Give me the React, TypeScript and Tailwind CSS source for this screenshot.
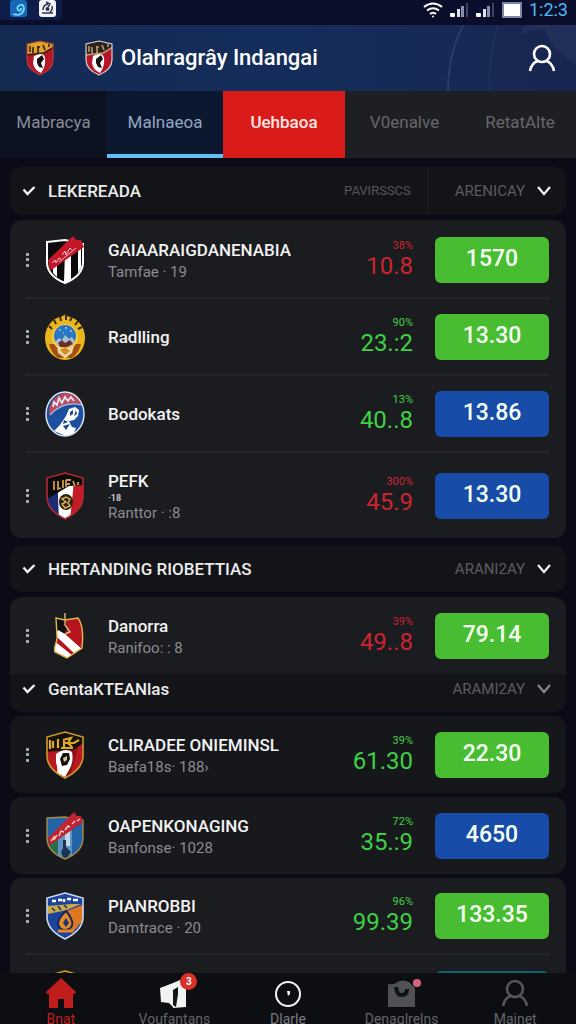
import { useState } from "react";
import type { ReactNode } from "react";

type Team = {
  name: string;
  note?: string;
  sub?: string;
  pct?: string;
  value?: string;
  up?: boolean;
  odds?: string;
  color: string;
  crest: ReactNode;
};

const SHIELD = "M20 1 L38 6 V25 C38 35 30 42 20 47 C10 42 2 35 2 25 V6 Z";

const Crest = ({ children }: { children: ReactNode }) => (
  <svg viewBox="0 0 40 48" className="h-12 w-10 shrink-0" aria-hidden="true">
    {children}
  </svg>
);

const StripeCrest = () => (
  <Crest>
    <path d="M2 6 L20 4 L38 8 V26 C38 36 30 43 20 47 C10 43 2 36 2 26 Z" fill="#0b0b0d" />
    <path d="M20 15 H26 V44 L20 47 L19 46 Z M8 29 H12 V41 L8 37 Z M33 10 H36 V32 L33 37 Z" fill="#fff" />
    <path d="M2 6 L20 4 L38 8 V26 C38 36 30 43 20 47 C10 43 2 36 2 26 Z" fill="none" stroke="#fff" strokeWidth="2" />
    <path d="M3 24 L28 0 L31 4 L36 4 L39 11 L5 35 Z" fill="#c4182a" />
    <path d="M7 27 L10 24 L11 27 L14 22 L16 23 M17 19 L20 15 L21 19 L25 12 L27 14 M14 26 L31 12" stroke="#f3c9cb" strokeWidth="1" fill="none" />
  </Crest>
);

const SunCrest = () => (
  <Crest>
    <circle cx="20" cy="4" r="2.500" fill="#b8860f" />
    <ellipse cx="20" cy="25" rx="20" ry="22" fill="#e8b51c" />
    <path d="M4 13 L7 16 M9 7 L11 11 M15 3 L16 8 M21 2 V7 M27 4 L25 8 M33 8 L30 12 M37 14 L33 16" stroke="#3c2b0d" strokeWidth="2" />
    <path d="M4 31 L11 31 L19 45 H13 Q6 40 4 31 M36 31 L29 31 L22 45 H27 Q34 40 36 31" fill="#a54f16" />
    <circle cx="20" cy="24" r="13" fill="#f1cd48" />
    <circle cx="20" cy="23" r="11" fill="#2a75c4" />
    <path d="M10 29 L14 25 L17 27 L20 22 L24 26 L27 24 L30 29 L26 33 H13 Z" fill="#a8bfd0" />
    <path d="M13 30 L17 27 L20 30 L25 27 L28 31 L22 34 H15 Z" fill="#6b2f2b" />
    <path d="M12 33 L20 36 L29 33 L27 40 L20 45 L13 40 Z" fill="#ecd9a0" />
    <path d="M15 37 L20 34 L25 38 L20 42 Z" fill="#d38a24" />
    <path d="M14 17 h2 M20 15 h2 M25 18 h2 M18 20 h1" stroke="#d9ecff" strokeWidth="1.2" />
  </Crest>
);

const BlueCrest = () => (
  <Crest>
    <ellipse cx="20" cy="24" rx="19" ry="22" fill="#1d4f9f" />
    <path d="M4 21 C5 9 14 3 22 3 C29 4 34 8 36 14 C24 12 13 16 5 26 Z" fill="#bd4a5a" />
    <path d="M8 17 L9 12 L12 15 L14 8 L17 13 L20 7 L23 11 L26 7 L29 11" fill="none" stroke="#dfe7f5" strokeWidth="1.8" />
    <path d="M5 25 C14 15 25 12 37 15" fill="none" stroke="#a9c3ea" strokeWidth="1.2" />
    <path d="M21 26 L24 19 L30 17 L34 20 L33 26 L29 30 L24 31 L27 37 L31 38 L29 43 L21 46 L9 41 L15 35 L19 29 Z" fill="#fff" />
    <path d="M25 22 L28 20 L28 24 L25 26 Z M31 20 L32 24 L29 26 Z M18 36 L25 34 L21 40 Z M19 30 L23 32 L18 34 Z" fill="#1b468d" />
    <ellipse cx="20" cy="24" rx="19" ry="22" fill="none" stroke="#dfe9f7" strokeWidth="1.4" />
  </Crest>
);

const TricolorCrest = () => (
  <Crest>
    <clipPath id="tri"><path d={SHIELD} /></clipPath>
    <g clipPath="url(#tri)">
      <path d="M0 0 H14 V48 H0 Z" fill="#1b2c75" />
      <path d="M12 0 H30 L26 48 H14 Z" fill="#fff" />
      <path d="M30 0 H40 V48 H25 Z" fill="#c31c26" />
      <path d="M0 0 H40 V13 L24 14 L4 26 H0 Z" fill="#0c0b0c" />
      <path d="M9 9 V18 M13 9 V17 L16 16 M18 8 V16 M21 8 H26 M21 12 H25 M21 8 V15 M28 9 L30 14 M33 10 V13" stroke="#cf9a47" strokeWidth="1.8" fill="none" />
    </g>
    <ellipse cx="21" cy="30" rx="7" ry="8" fill="#2a2210" />
    <path d="M17 27 L21 25 L25 27 L23 31 L25 34 L20 36 L17 32 L21 30 Z" fill="none" stroke="#d8b260" strokeWidth="1.500" />
    <path d={SHIELD} fill="none" stroke="#b22730" strokeWidth="1.600" />
  </Crest>
);

const SashCrest = () => (
  <Crest>
    <clipPath id="sash"><path d="M11 6 L20 8 L33 6 C39 14 38 27 37 36 L22 46 L10 40 C8 34 13 30 12 24 Z" /></clipPath>
    <g clipPath="url(#sash)">
      <rect width="40" height="48" fill="#b6141e" />
      <path d="M8 4 H20 L22 17 L18 24 L10 19 Z" fill="#111" />
      <path d="M13 18 L20 22 L38 38 L32 44 L10 23 Z M8 28 L28 44 L22 50 L8 38 Z" fill="#fff" />
    </g>
    <path d="M20 1 V13 L25 20 L20 22" fill="none" stroke="#d7c17a" strokeWidth="1.4" />
    <path d="M11 6 L20 8 L33 6 C39 14 38 27 37 36 L22 46 L10 40 C8 34 13 30 12 24 Z" fill="none" stroke="#dfb74e" strokeWidth="1.4" />
  </Crest>
);

const GoldCrest = ({ id }: { id: string }) => (
  <Crest>
    <clipPath id={id}><path d={SHIELD} /></clipPath>
    <g clipPath={`url(#${id})`}>
      <rect width="40" height="48" fill="#b91a22" />
      <path d="M28 14 H34 L24 48 H20 Z" fill="#8e1119" />
      <path d="M0 0 H40 V11 L28 19 L0 21 Z" fill="#15110c" />
      <path d="M5 9 V18 M8 10 V17 M13 8 V17 M18 9 L26 7 L23 12 L27 16 M19 8 V16 M20 12 H29 L34 9 M16 17 H28" stroke="#dda925" strokeWidth="2.2" fill="none" />
      <path d="M11 23 Q20 16 27 21 Q29 31 24 39 L20 46 L12 42 Q13 36 11 32 Z" fill="#fff" />
    </g>
    <path d="M15 28 L18 22 L24 22 L25 28 L22 34 L17 35 Z" fill="#15110c" />
    <path d="M18 27 L22 25 L22 29 L19 31 Z" fill="#d7c49b" />
    <path d={SHIELD} fill="none" stroke="#cf9a2a" strokeWidth="1.600" />
  </Crest>
);

const SkyCrest = () => (
  <Crest>
    <clipPath id="sky"><path d="M2 6 L20 5 L38 8 V26 C38 36 30 43 20 47 C10 43 2 36 2 26 Z" /></clipPath>
    <g clipPath="url(#sky)">
      <rect width="40" height="48" fill="#2364a8" />
      <path d="M0 24 H13 V48 H0 Z" fill="#28704d" />
      <path d="M13 24 L27 15 V48 H13 Z" fill="#5d93c4" />
      <path d="M20 20 L25 17 V34 H20 Z" fill="#c4d6e4" />
      <path d="M18 28 H21 V35 L26 40 L22 46 H18 L16 40 L18 36 Z" fill="#1d3450" />
    </g>
    <path d="M2 6 L20 5 L38 8 V26 C38 36 30 43 20 47 C10 43 2 36 2 26 Z" fill="none" stroke="#a38b4c" strokeWidth="1.4" />
    <path d="M3 26 L29 0 L32 4 L36 4 L38 10 L4 34 Z" fill="#c02430" />
    <path d="M6 29 L10 24 M9 28 L12 23 M14 24 L16 19 L19 20 M20 18 L23 14 L25 15 M27 12 L30 9 M32 9 L35 7" stroke="#f2cfd0" strokeWidth="1.4" fill="none" />
  </Crest>
);

const OrangeCrest = () => (
  <Crest>
    <clipPath id="org"><path d={SHIELD} /></clipPath>
    <g clipPath="url(#org)">
      <rect width="40" height="48" fill="#1c449c" />
      <path d="M40 12 L22 19 L20 30 L28 40 L40 26 Z" fill="#e07722" />
      <path d="M2 14 L26 12 L36 12 L22 18 L3 22 Z" fill="#c9a94b" />
      <path d="M7 9 H11 M13 8 H17 M19 7 V10 M22 7 H26 M28 8 H33" stroke="#fff" strokeWidth="2.600" />
      <path d="M7 16 L10 19 M13 14 L16 18 M19 13 L22 16" stroke="#1c2b58" strokeWidth="1.4" />
      <path d="M21 19 Q13 26 13 32 Q15 39 21 38 Q29 36 27 29 Q25 23 21 19 Z" fill="#e58a24" stroke="#13275c" strokeWidth="2" />
      <path d="M18 31 L21 26 L24 31 L21 35 Z" fill="#1b3475" />
      <path d="M13 39 H28" stroke="#e58a24" strokeWidth="3" />
    </g>
    <path d={SHIELD} fill="none" stroke="#ccd9ef" strokeWidth="1.600" />
  </Crest>
);

const leaders: Team[] = [
  { name: "GAIAARAIGDANENABIA", sub: "Tamfae · 19", pct: "38%", value: "10.8", odds: "1570", color: "bg-[#48bd32]", crest: <StripeCrest /> },
  { name: "Radlling", pct: "90%", value: "23.:2", up: true, odds: "13.30", color: "bg-[#48bd32]", crest: <SunCrest /> },
  { name: "Bodokats", pct: "13%", value: "40..8", up: true, odds: "13.86", color: "bg-[#174da8]", crest: <BlueCrest /> },
  { name: "PEFK", note: "·18", sub: "Ranttor · :8", pct: "300%", value: "45.9", odds: "13.30", color: "bg-[#174da8]", crest: <TricolorCrest /> },
];
const danorra: Team[] = [
  { name: "Danorra", sub: "Ranifoo: : 8", pct: "39%", value: "49..8", odds: "79.14", color: "bg-[#48bd32]", crest: <SashCrest /> },
];
const cliradee: Team[] = [
  { name: "CLIRADEE ONIEMINSL", sub: "Baefa18s· 188›", pct: "39%", value: "61.30", up: true, odds: "22.30", color: "bg-[#48bd32]", crest: <GoldCrest id="gold-row" /> },
];
const oapen: Team[] = [
  { name: "OAPENKONAGING", sub: "Banfonse· 1028", pct: "72%", value: "35.:9", up: true, odds: "4650", color: "bg-[#174da8]", crest: <SkyCrest /> },
];
const pianrobbi: Team[] = [
  { name: "PIANROBBI", sub: "Damtrace · 20", pct: "96%", value: "99.39", up: true, odds: "133.35", color: "bg-[#48bd32]", crest: <OrangeCrest /> },
  { name: "", color: "bg-[#0c6473]", crest: <GoldCrest id="gold-last" /> },
];

const TeamRow = ({ team }: { team: Team }) => (
  <li className={`flex items-center border-b-2 border-[#242529] last:border-b-0 ${team.note ? "min-h-[85px]" : "min-h-[77px]"}`}>
    <button type="button" aria-label={`Menu ${team.name}`} className="w-5 shrink-0">
      <svg viewBox="0 0 5 16" className="h-4 w-[5px]" fill="#b4b5b8">
        <rect x="1" y="1" width="3" height="3" rx="1" />
        <rect x="1" y="6" width="3" height="3" rx="1" />
        <rect x="1" y="12" width="3" height="3" rx="1" />
      </svg>
    </button>
    {team.crest}
    <div className="ml-[23px] min-w-0 flex-1 whitespace-nowrap">
      <h3 className="text-[17px] leading-6 font-medium text-[#f3f3f4]">{team.name}</h3>
      {team.note && <p className="text-[9px] leading-[10px] font-bold text-[#c4c5c8]">{team.note}</p>}
      {team.sub && <p className="text-[15px] leading-5 text-[#8b8c90]">{team.sub}</p>}
    </div>
    <div className={`mr-[22px] text-right ${team.up ? "text-[#3fd044]" : "text-[#cc2430]"}`}>
      <p className="text-[11px] leading-3">{team.pct}</p>
      <p className="text-2xl leading-7">{team.value}</p>
    </div>
    <button type="button" aria-label={team.odds || "Odds"} className={`h-[46px] w-[114px] shrink-0 rounded-md text-[23px] font-medium text-[#f4fff2] ${team.color}`}>
      {team.odds}
    </button>
  </li>
);

const Card = ({ teams, className }: { teams: Team[]; className: string }) => (
  <ul className={`pr-[17px] pl-[15px] ${className}`}>
    {teams.map((team, i) => <TeamRow key={i} team={team} />)}
  </ul>
);

const Check = () => (
  <svg viewBox="0 0 14 12" className="h-3 w-3.5" fill="none" stroke="#f4f4f4" strokeWidth="2.4">
    <path d="M1.500 4.500 L5.500 9 L12.500 2" />
  </svg>
);

const SectionHead = ({ title, extra, sort, dim, className }: { title: string; extra?: string; sort: string; dim?: boolean; className: string }) => (
  <div className={`flex items-center bg-[#131417] pr-[15px] pl-3 ${className}`}>
    <Check />
    <h2 className="ml-3 flex-1 text-[17px] leading-6 font-medium whitespace-nowrap text-[#ececed]">{title}</h2>
    {extra && <span className="mr-4 text-[13px] text-[#55565a]">{extra}</span>}
    <button type="button" className={`flex h-full items-center gap-3 pl-[27px] text-[15px] text-[#5b5c60] ${extra ? "border-l border-[#1b1c20]" : ""}`}>
      {sort}
      <svg viewBox="0 0 14 12" className="h-3 w-3.5" fill="none" stroke={dim ? "#85868a" : "#f0f0f0"} strokeWidth="2.2">
        <path d="M1 2 L7 9 L13 2" />
      </svg>
    </button>
  </div>
);

const UserIcon = ({ className }: { className: string }) => (
  <svg viewBox="0 0 28 28" className={className} fill="none" stroke="currentColor" strokeWidth="2.600">
    <circle cx="14" cy="10" r="8" />
    <path d="M2 27 C3 22 6 18 10 17 M18 17 C22 18 25 22 26 27" />
  </svg>
);

const SmallShield = ({ id, edge, band, mark }: { id: string; edge: string; band: string; mark: string }) => (
  <svg viewBox="0 0 28 36" className="h-9 w-7 shrink-0" aria-hidden="true">
    <clipPath id={id}><path d="M14 1 L27 4 V20 C27 27 21 32 14 35 C7 32 1 27 1 20 V4 Z" /></clipPath>
    <g clipPath={`url(#${id})`}>
      <rect width="28" height="36" fill="#b51728" />
      <path d="M0 0 H28 V7 L18 13 L0 15 Z" fill={band} />
      <path d="M4 6 V12 M7 7 V13 M11 7 H14 M12 6 V13 M17 5 L19 10 M23 4 V7 M0 15 L18 13 L28 7" stroke={mark} strokeWidth="1.600" fill="none" />
      <path d="M8 16 Q18 11 19 18 Q20 26 15 33 Q8 30 7 23 Z" fill="#fff" />
      <path d="M11 19 L16 15 L18 19 L15 23 L17 28 L13 27 L11 23 Z" fill="#171214" />
    </g>
    <path d="M14 1 L27 4 V20 C27 27 21 32 14 35 C7 32 1 27 1 20 V4 Z" fill="none" stroke={edge} strokeWidth="1.2" />
  </svg>
);

const Signal = () => (
  <svg viewBox="0 0 19 16" className="h-4 w-[19px]">
    <rect x="0" y="11" width="5" height="4" rx="1" fill="#fff" />
    <rect x="7" y="7" width="3" height="8" fill="#dfe3f2" />
    <rect x="11" y="4" width="3" height="11" fill="#8a90ad" />
    <rect x="16" y="1" width="2" height="14" fill="#3d4468" />
  </svg>
);

const StatusBar = () => (
  <div className="flex h-[25px] shrink-0 items-start justify-between bg-[#0a0e2b]">
    <div className="flex h-5 items-start gap-3 rounded-br-md bg-[#0f1d4a] pr-1.5 pl-2.5">
      <svg viewBox="0 0 17 17" className="h-[17px] w-[17px]">
        <rect width="17" height="17" rx="3" fill="#1769b8" />
        <path d="M3 14 Q12 17 14 9 Q14 4 10 5 Q6 7 8 10 Q11 12 11 8" fill="none" stroke="#79dcf7" strokeWidth="1.8" />
      </svg>
      <svg viewBox="0 0 17 17" className="h-[17px] w-[17px]">
        <rect width="17" height="17" rx="3" fill="#f3f4fa" />
        <path d="M3 13 H14 M4 10 Q4 5 9 4 M7 2 L11 4 L9 7 M13 6 Q14 10 11 12" fill="none" stroke="#2b3048" strokeWidth="1.500" />
        <circle cx="8.500" cy="9" r="2" fill="#2b3048" />
      </svg>
    </div>
    <div className="flex items-center gap-[7px] pr-2">
      <svg viewBox="0 0 20 16" className="h-4 w-5" fill="none" stroke="#fff" strokeWidth="2">
        <path d="M1 5 Q10 -2 19 5 M4 8.500 Q10 4 16 8.500 M7 12 Q10 9.500 13 12" />
        <circle cx="10" cy="14.500" r="1" fill="#fff" stroke="none" />
      </svg>
      <Signal />
      <Signal />
      <svg viewBox="0 0 20 16" className="h-4 w-5">
        <rect x="1" y="1" width="18" height="14" fill="#fff" stroke="#7e84a4" strokeWidth="2" />
      </svg>
      <span className="text-lg leading-5 text-[#4fb9ee]">1:2:3</span>
    </div>
  </div>
);

const tabs = ["Mabracya", "Malnaeoa", "Uehbaoa", "V0enalve", "RetatAlte"];
const tabStyles = [
  "bg-[#0d1220] text-[#858b98]",
  "border-[#63bdf5] bg-[#0c1730] text-[#93a6c4]",
  "bg-[#d91c1a] font-medium text-[#ffe9e4]",
  "bg-[#1e1f23] text-[#66676b]",
  "bg-[#1e1f23] text-[#66676b]",
];

export default function App() {
  const [tab, setTab] = useState(2);

  return (
    <div className="flex h-screen flex-col overflow-hidden bg-[#0a0b16] font-[Roboto,sans-serif] text-white">
      <StatusBar />
      <header className="relative flex h-[66px] shrink-0 items-center overflow-hidden bg-linear-to-r from-[#142a53] via-[#152d5b] to-[#182650] px-[26px]">
        <svg viewBox="0 0 140 66" className="absolute top-0 right-0 h-[66px] w-[140px]" fill="none" stroke="#5c74a8" aria-hidden="true">
          <path d="M27 0 Q12 30 12 66" strokeWidth="2" opacity=".25" />
          <path d="M62 0 Q52 30 54 66" opacity=".2" />
          <path d="M84 8 L108 4 L118 22 L140 40 V0 H90 Z" fill="#44527d" stroke="none" opacity=".2" />
        </svg>
        <SmallShield id="head-a" edge="#b33c32" band="#d9a52b" mark="#3a1a12" />
        <div className="ml-[31px]"><SmallShield id="head-b" edge="#d6cfd6" band="#2c201b" mark="#b59b74" /></div>
        <h1 className="ml-2 flex-1 text-[22px] leading-8 font-medium whitespace-nowrap">Olahragrây Indangai</h1>
        <button type="button" aria-label="Account" className="relative -mr-1.5">
          <UserIcon className="h-7 w-7" />
        </button>
      </header>
      <nav className="grid h-[67px] shrink-0 grid-cols-[107fr_116fr_122fr_119fr_112fr]">
        {tabs.map((name, i) => (
          <button
            key={name}
            type="button"
            aria-pressed={tab === i}
            onClick={() => setTab(i)}
            className={`border-b-4 text-[17px] ${i === 1 ? "" : "border-transparent"} ${tabStyles[i]}`}
          >
            {name}
          </button>
        ))}
      </nav>

      <main className="min-h-0 flex-1 overflow-hidden px-2.5 pt-[9px]">
        <SectionHead title="LEKEREADA" extra="PAVIRSSCS" sort="ARENICAY" className="h-12 rounded-xl" />
        <Card teams={leaders} className="mt-[5px] rounded-xl bg-[#1b1c1f] pt-0.5" />
        <SectionHead title="HERTANDING RIOBETTIAS" sort="ARANI2AY" className="mt-2 h-[46px] rounded-xl" />
        <Card teams={danorra} className="mt-[5px] rounded-t-xl bg-[#1b1c1f]" />
        <SectionHead title="GentaKTEANlas" sort="ARAMI2AY" dim className="h-[38px] rounded-b-xl pb-2" />
        <Card teams={cliradee} className="mt-1 rounded-xl bg-[#16171a]" />
        <Card teams={oapen} className="mt-1 rounded-xl bg-[#18191c]" />
        <Card teams={pianrobbi} className="mt-1 rounded-t-xl bg-[#1b1c1f]" />
      </main>

      <footer className="grid h-[51px] shrink-0 grid-cols-5 overflow-hidden bg-[#0d0e11] px-1 pt-1 text-sm leading-5 text-[#636468]">
        <a href="#home" className="flex flex-col items-center text-[#c11d1b]">
          <svg viewBox="0 0 30 32" className="h-8 w-[30px] shrink-0" fill="currentColor">
            <path d="M15 1 L30 15 L29 17 H27 V31 H18 V22 H12 V31 H3 V17 H1 L0 15 Z" />
          </svg>
          Bnat
        </a>
        <a href="#news" className="flex flex-col items-center">
          <span className="relative">
            <svg viewBox="0 0 30 32" className="h-8 w-[30px]" fill="#f2f2f2">
              <path d="M1 11 L14 6 V30 L10 26 L2 25 Z" />
              <path d="M14 6 L21 3 L27 8 V30 L14 31 Z" />
              <path d="M14 13 L19 10 V17 L17 30 L14 28 Z" fill="#141518" />
            </svg>
            <span className="absolute -top-1 -right-2 flex h-[17px] w-[17px] items-center justify-center rounded-full bg-[#d9302a] text-[10px] leading-none font-bold text-white">3</span>
          </span>
          Voufantans
        </a>
        <a href="#play" className="flex flex-col items-center text-[#7b7c80]">
          <svg viewBox="0 0 30 32" className="h-8 w-[30px] shrink-0" fill="none" stroke="#f4f4f4" strokeWidth="2">
            <circle cx="15" cy="17" r="12" />
            <path d="M14 14 h3 v3 l-2 2 z" fill="#f4f4f4" stroke="none" />
          </svg>
          Dlarle
        </a>
        <a href="#bag" className="flex flex-col items-center">
          <span className="relative">
            <svg viewBox="0 0 30 32" className="h-8 w-[30px]" fill="#505155">
              <path d="M1 7 Q8 8 10 5 Q16 2 22 5 L28 11 V30 H1 Z" />
              <path d="M9 10 Q10 19 15 18 Q20 18 20 12" fill="none" stroke="#111215" strokeWidth="4" />
            </svg>
            <span className="absolute top-0.5 -right-1 h-2 w-2 rounded-full bg-[#d8627e]" />
          </span>
          Denaqlrelns
        </a>
        <a href="#account" className="flex flex-col items-center">
          <UserIcon className="h-8 w-7 shrink-0 text-[#55565a]" />
          Mainet
        </a>
      </footer>
    </div>
  );
}
